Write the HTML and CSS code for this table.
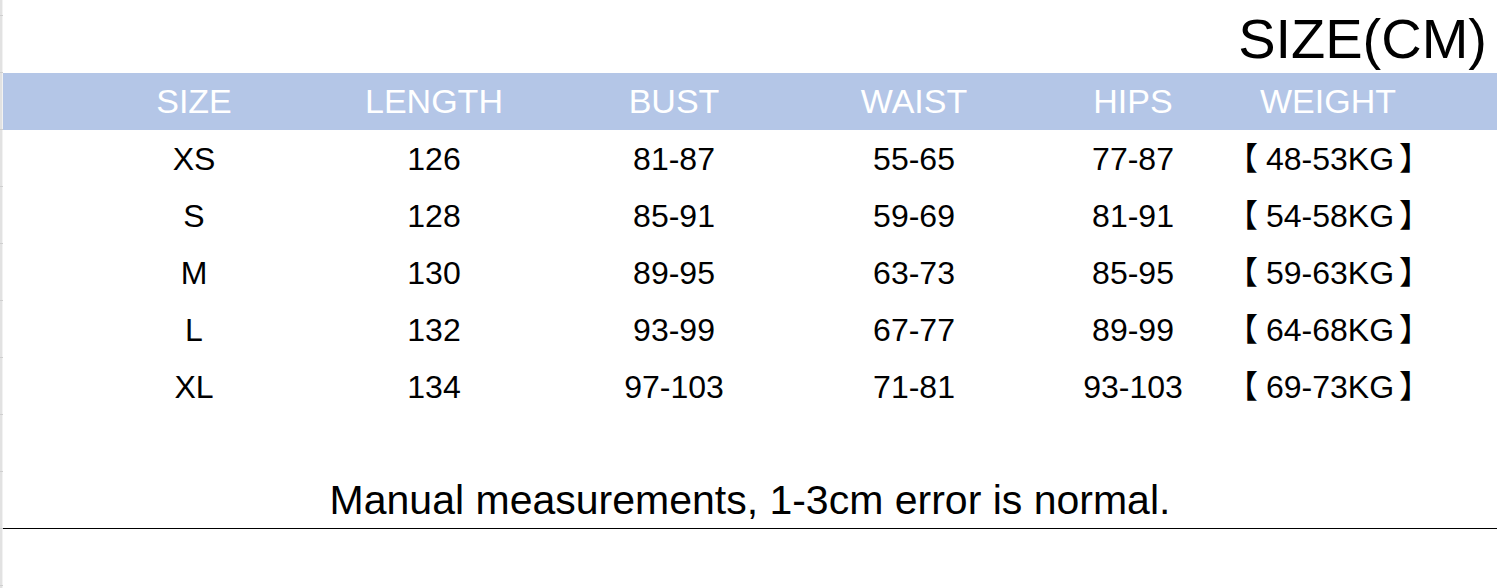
FILE: index.html
```html
<!DOCTYPE html>
<html lang="en">
<head>
<meta charset="utf-8">
<title>Size chart</title>
<link rel="stylesheet" href="styles.css">
</head>
<body>
<div class="page">
  <div class="gutter"></div>
  <div class="sheet">
    <div class="title">SIZE(CM)</div>
    <div class="row head">
      <div>SIZE</div><div>LENGTH</div><div>BUST</div><div>WAIST</div><div>HIPS</div><div>WEIGHT</div>
    </div>
    <div class="row">
      <div>XS</div><div>126</div><div>81-87</div><div>55-65</div><div>77-87</div><div class="kg"><span class="lb">【</span>48-53KG<span class="rb">】</span></div>
    </div>
    <div class="row">
      <div>S</div><div>128</div><div>85-91</div><div>59-69</div><div>81-91</div><div class="kg"><span class="lb">【</span>54-58KG<span class="rb">】</span></div>
    </div>
    <div class="row">
      <div>M</div><div>130</div><div>89-95</div><div>63-73</div><div>85-95</div><div class="kg"><span class="lb">【</span>59-63KG<span class="rb">】</span></div>
    </div>
    <div class="row">
      <div>L</div><div>132</div><div>93-99</div><div>67-77</div><div>89-99</div><div class="kg"><span class="lb">【</span>64-68KG<span class="rb">】</span></div>
    </div>
    <div class="row">
      <div>XL</div><div>134</div><div>97-103</div><div>71-81</div><div>93-103</div><div class="kg"><span class="lb">【</span>69-73KG<span class="rb">】</span></div>
    </div>
    <div class="note">Manual measurements, 1-3cm error is normal.</div>
  </div>
</div>
</body>
</html>
```
FILE: styles.css
```css
html, body {
  margin: 0;
  padding: 0;
  background: #ffffff;
}
body {
  font-family: "Liberation Sans", Arial, "Noto Sans CJK SC", sans-serif;
  color: #000;
  width: 1497px;
  height: 588px;
  overflow: hidden;
}
.page {
  display: flex;
  height: 588px;
}
.gutter {
  width: 3px;
  flex: 0 0 3px;
  background:
    linear-gradient(#cfcfcf 0 1px, transparent 1px) 0 72px / 3px 57px repeat-y,
    linear-gradient(to right, #e2e2e2 0 2px, #f2f2f2 2px 3px);
}
.sheet {
  flex: 1;
  display: flex;
  flex-direction: column;
}
.title {
  height: 73px;
  box-sizing: border-box;
  padding-top: 11px;
  padding-right: 10px;
  font-size: 56px;
  line-height: 56px;
  text-align: right;
}
.row {
  display: grid;
  grid-template-columns: 240px 240px 240px 240px 198px 192px 1fr;
  padding-left: 71px;
  height: 57px;
  box-sizing: border-box;
  padding-top: 1px;
  font-size: 32px;
  line-height: 56px;
  text-align: center;
}
.row.head {
  background: #b4c6e7;
  color: #ffffff;
  font-size: 34px;
  padding-top: 0;
  line-height: 57px;
}
.kg {
  white-space: nowrap;
}
.lb {
  margin-left: -6px;
  margin-right: 8px;
}
.rb {
  margin-left: 5px;
  margin-right: -5px;
}
.note {
  height: 114px;
  box-sizing: border-box;
  display: flex;
  align-items: flex-end;
  justify-content: center;
  padding-bottom: 4px;
  font-size: 41px;
  border-bottom: 1px solid #000;
}
```
